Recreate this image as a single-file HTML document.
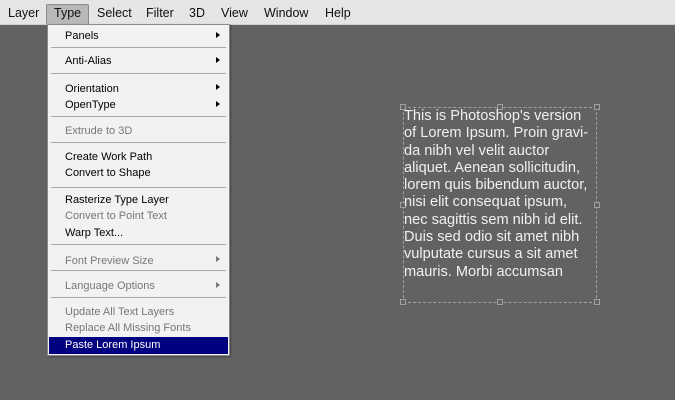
<!DOCTYPE html>
<html><head><style>
*{margin:0;padding:0;box-sizing:border-box}
body{width:675px;height:400px;background:#626262;position:relative;overflow:hidden;font-family:"Liberation Sans",sans-serif}
#bar{position:absolute;left:0;top:0;width:675px;height:25px;background:#e5e5e5;border-bottom:1px solid #cfcfcf}
#bar span{position:absolute;top:6px;font-size:12.5px;color:#111}
#typebtn{position:absolute;left:46px;top:4px;width:43px;height:20px;background:#b8b8b8;border:1px solid #8c8c8c;border-bottom:none;border-radius:2px 2px 0 0}
#menu{position:absolute;left:47px;top:24px;width:183px;height:332px;background:#f2f2f2;border:1px solid #8a8a8a;box-shadow:1px 1px 2px rgba(0,0,0,.3)}
.it{position:absolute;left:17px;font-size:11px;color:#000;white-space:nowrap;margin-top:1px}
.g{color:#777}
.ar{position:absolute;left:168px;width:0;height:0;border-top:3.5px solid transparent;border-bottom:3.5px solid transparent;border-left:4px solid #000}
.ar.g2{border-left-color:#777}
.sep{position:absolute;left:3px;width:175px;height:1px;background:#a8a8a8}
#hl{position:absolute;left:1px;top:312px;width:179px;height:17px;background:#000080}
#txt{position:absolute;left:404px;top:108px;font-size:14.6px;line-height:17.3px;color:#f0f0f0;white-space:pre}
#box{position:absolute;left:403px;top:107px;width:194px;height:196px;border:1px dashed #a0a0a0}
.h{position:absolute;width:6px;height:6px;border:1px solid #a0a0a0;background:#626262}
</style></head><body>
<div id="bar">
<div id="typebtn"></div>
<span style="left:8px">Layer</span>
<span style="left:54px">Type</span>
<span style="left:97px">Select</span>
<span style="left:146px">Filter</span>
<span style="left:189px">3D</span>
<span style="left:221px">View</span>
<span style="left:264px">Window</span>
<span style="left:325px">Help</span>
</div>
<div id="menu">
<div id="hl"></div>
<div class="it" style="top:4px">Panels</div><div class="ar" style="top:7px"></div>
<div class="sep" style="top:22px"></div>
<div class="it" style="top:29px">Anti-Alias</div><div class="ar" style="top:32px"></div>
<div class="sep" style="top:48px"></div>
<div class="it" style="top:57px">Orientation</div><div class="ar" style="top:59px"></div>
<div class="it" style="top:73px">OpenType</div><div class="ar" style="top:76px"></div>
<div class="sep" style="top:91px"></div>
<div class="it g" style="top:99px">Extrude to 3D</div>
<div class="sep" style="top:117px"></div>
<div class="it" style="top:125px">Create Work Path</div>
<div class="it" style="top:141px">Convert to Shape</div>
<div class="sep" style="top:162px"></div>
<div class="it" style="top:168px">Rasterize Type Layer</div>
<div class="it g" style="top:184px">Convert to Point Text</div>
<div class="it" style="top:201px">Warp Text...</div>
<div class="sep" style="top:219px"></div>
<div class="it g" style="top:229px">Font Preview Size</div><div class="ar g2" style="top:231px"></div>
<div class="sep" style="top:245px"></div>
<div class="it g" style="top:254px">Language Options</div><div class="ar g2" style="top:257px"></div>
<div class="sep" style="top:272px"></div>
<div class="it g" style="top:280px">Update All Text Layers</div>
<div class="it g" style="top:296px">Replace All Missing Fonts</div>
<div class="it" style="top:313px;color:#fff">Paste Lorem Ipsum</div>
</div>
<div id="box"></div>
<div class="h" style="left:400px;top:104px"></div>
<div class="h" style="left:497px;top:104px"></div>
<div class="h" style="left:594px;top:104px"></div>
<div class="h" style="left:400px;top:202px"></div>
<div class="h" style="left:594px;top:202px"></div>
<div class="h" style="left:400px;top:299px"></div>
<div class="h" style="left:497px;top:299px"></div>
<div class="h" style="left:594px;top:299px"></div>
<div id="txt">This is Photoshop's version
of Lorem Ipsum. Proin gravi-
da nibh vel velit auctor
aliquet. Aenean sollicitudin,
lorem quis bibendum auctor,
nisi elit consequat ipsum,
nec sagittis sem nibh id elit.
Duis sed odio sit amet nibh
vulputate cursus a sit amet
mauris. Morbi accumsan</div>
</body></html>
